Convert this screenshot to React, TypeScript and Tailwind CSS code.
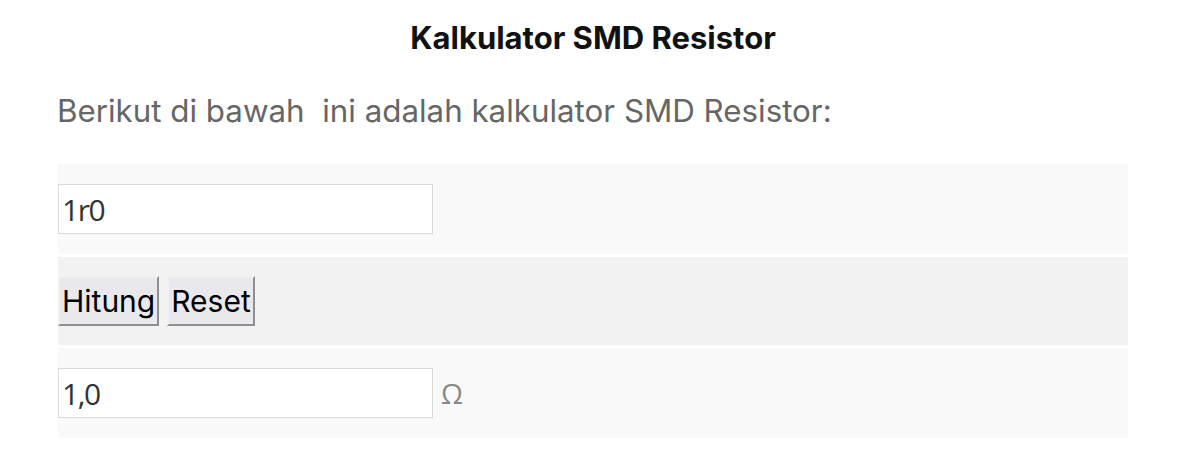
import { useState } from "react";

const ResistorCalc = () => {
  const [kode, setKode] = useState("1r0");
  const [hasil, setHasil] = useState("1,0");

  const hitung = () => {
    const v = parseFloat(kode.toLowerCase().replace("r", "."));
    setHasil(isNaN(v) ? "" : v.toFixed(1).replace(".", ","));
  };

  return (
    <div className="pl-[58px] pt-[19px] w-[1128px] font-['Inter',sans-serif]">
      <h2 className="text-center text-[31px] font-bold text-[#111] leading-[38px]">
        Kalkulator SMD Resistor
      </h2>
      <p className="mt-[34px] -ml-[1px] text-[31.3px] text-[#666] leading-[40px]">
        Berikut di bawah{"\u00a0"} ini adalah kalkulator SMD Resistor:
      </p>
      <div className="mt-[33px] flex flex-col gap-[3px]">
        {/* input kode */}
        <div className="bg-[#f9f9f9] h-[90px] flex items-center">
          <input
            value={kode}
            onChange={(e) => setKode(e.target.value)}
            className="w-[375px] h-[50px] bg-white border border-[#d9d9d9] px-[3px] text-[30px] tracking-[-1.5px] text-[#333] font-['Open_Sans',sans-serif] outline-none"
          />
        </div>
        {/* tombol */}
        <div className="bg-[#f2f2f2] h-[88px] flex items-center gap-[8px]">
          <button
            onClick={hitung}
            className="h-[50px] px-[2px] bg-[#e9e9ed] border-2 border-t-[#f0f0f0] border-l-[#f0f0f0] border-r-[#8f8f8f] border-b-[#8f8f8f] text-[30px] text-black"
          >
            Hitung
          </button>
          <button
            onClick={() => {
              setKode("");
              setHasil("");
            }}
            className="h-[50px] px-[2px] bg-[#e9e9ed] border-2 border-t-[#f0f0f0] border-l-[#f0f0f0] border-r-[#8f8f8f] border-b-[#8f8f8f] text-[30px] text-black"
          >
            Reset
          </button>
        </div>
        {/* hasil */}
        <div className="bg-[#f9f9f9] h-[90px] flex items-center">
          <input
            value={hasil}
            readOnly
            className="w-[375px] h-[50px] bg-white border border-[#d9d9d9] px-[3px] text-[30px] tracking-[-1.5px] text-[#333] font-['Open_Sans',sans-serif] outline-none"
          />
          <span className="ml-[8px] text-[28px] text-[#888] font-['Open_Sans',sans-serif]">Ω</span>
        </div>
      </div>
    </div>
  );
};

export default function App() {
  return <ResistorCalc />;
}
